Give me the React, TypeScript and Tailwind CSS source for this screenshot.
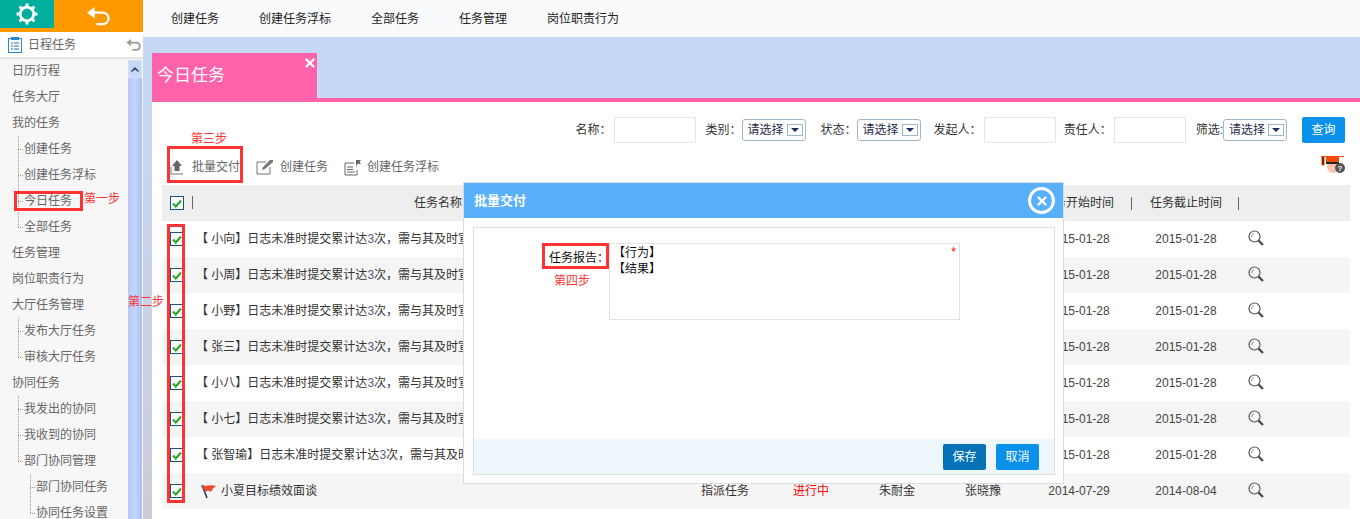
import React from 'react';
import { X, ChevronUp } from 'lucide-react';

const Gear = () => (
  <svg width="24" height="24" viewBox="0 0 24 24">
    <g stroke="#fff" strokeWidth="3">
      <path d="M12 1.500v3M12 19.500v3M1.500 12h3M19.500 12h3M4.600 4.600l2.200 2.200M17.200 17.200l2.200 2.200M4.600 19.400l2.200-2.200M17.200 6.800l2.200-2.200" />
    </g>
    <circle cx="12" cy="12" r="6.800" fill="none" stroke="#fff" strokeWidth="2.800" />
  </svg>
);

const Back = ({ w, h, color, head }: { w: number; h: number; color: string; head: number }) => (
  <svg width={w} height={h} viewBox="0 0 24 20">
    <path d="M0 6 L8 0 V12 Z" fill={color} />
    <path d="M6 6 H16 C20 6 22.500 8.500 22.500 12 C22.500 15.500 20 18 16 18 H10" fill="none" stroke={color} strokeWidth={head} />
  </svg>
);

const Lens = () => (
  <svg width="16" height="16" viewBox="0 0 16 16">
    <circle cx="6.500" cy="6.500" r="5.500" fill="none" stroke="#555" strokeWidth="1.200" />
    <path d="M3.500 7 A3.200 3.200 0 0 1 6 3.500" fill="none" stroke="#999" />
    <path d="M10.500 10.500 L15 15" stroke="#444" strokeWidth="2.200" />
  </svg>
);

const Tree = ({ children }: { children: React.ReactNode }) => (
  <div className="relative">
    <div className="absolute bottom-[13px] left-[18px] top-0 w-0 border-l border-dotted border-[#999]" />
    {children}
  </div>
);

const Item = ({ label, level = 0 }: { label: string; level?: number }) => {
  if (level === 0) return <div className="h-[26px] pl-3 leading-[26px]">{label}</div>;
  return (
    <div className={`flex h-[26px] items-center ${level === 1 ? 'pl-[18px]' : 'pl-[30px]'}`}>
      <span className="mr-px w-[5px] border-t border-dotted border-[#999]" />
      {label}
    </div>
  );
};

const Sidebar = () => (
  <aside className="flex h-full w-[143px] shrink-0 flex-col overflow-hidden bg-[#f7f7f7] text-[12px] text-[#666]">
    <div className="h-8 shrink-0 bg-[#ff9900]">
      <div className="flex h-full">
        <div className="flex h-7 w-[54px] items-center justify-center bg-[#00ae9d]">
          <Gear />
        </div>
        <div className="flex h-8 flex-1 items-center justify-center">
          <Back w={23} h={19} color="#fff" head={2.4} />
        </div>
      </div>
    </div>
    <div className="flex h-[27px] shrink-0 items-center border-b-2 border-[#e4e4e4] bg-white pl-2 pr-[2px]">
      <svg width="14" height="16" viewBox="0 0 14 16" className="shrink-0">
        <rect x="0.5" y="1.5" width="13" height="14" fill="#fff" stroke="#2a86d0" />
        <rect x="3" y="0" width="8" height="3" fill="#2a86d0" />
        <path d="M3 6h2M6 6h5M3 9h2M6 9h5M3 12h2M6 12h5" stroke="#1f6fb5" />
      </svg>
      <span className="ml-[6px] flex-1">日程任务</span>
      <Back w={15} h={12} color="#999" head={3} />
    </div>
    <div className="flex min-h-0 flex-1">
      <div className="-mt-px w-[127px] shrink-0">
        <Item label="日历行程" />
        <Item label="任务大厅" />
        <Item label="我的任务" />
        <Tree>
          <Item label="创建任务" level={1} />
          <Item label="创建任务浮标" level={1} />
          <Item label="今日任务" level={1} />
          <Item label="全部任务" level={1} />
        </Tree>
        <Item label="任务管理" />
        <Item label="岗位职责行为" />
        <Item label="大厅任务管理" />
        <Tree>
          <Item label="发布大厅任务" level={1} />
          <Item label="审核大厅任务" level={1} />
        </Tree>
        <Item label="协同任务" />
        <Tree>
          <Item label="我发出的协同" level={1} />
          <Item label="我收到的协同" level={1} />
          <Item label="部门协同管理" level={1} />
        </Tree>
        <div className="relative">
          <div className="absolute bottom-[13px] left-[30px] top-0 border-l border-dotted border-[#999]" />
          <Item label="部门协同任务" level={2} />
          <Item label="协同任务设置" level={2} />
        </div>
      </div>
      <div className="ml-px mt-px flex w-[14px] flex-col bg-gradient-to-r from-[#b4c9f7] via-[#c3d6fb] to-[#a9c1f2]">
        <div className="flex h-[18px] items-center justify-center border border-[#d5e2f8] bg-[#c8d9f7] text-[#33507f]">
          <ChevronUp size={13} strokeWidth={3.5} />
        </div>
      </div>
    </div>
  </aside>
);

const Field = ({ label, width, className = '' }: { label: string; width: number; className?: string }) => (
  <div className={`flex items-center ${className}`}>
    <span>{label}：</span>
    <div className="ml-[2px] h-[26px] border border-[#e2e6e8] bg-white" style={{ width }} />
  </div>
);

const Select = ({ label, className = '' }: { label: string; className?: string }) => (
  <div className={`flex items-center ${className}`}>
    <span>{label}</span>
    <div className="flex h-[22px] w-[64px] items-center justify-between rounded-[3px] border border-[#9db8c4] bg-white pl-[5px] pr-[2px] text-[#1f2d4d]">
      请选择
      <span className="flex h-[12px] w-[16px] items-center justify-center border border-[#9db8c4]">
        <span className="h-0 w-0 border-x-[4px] border-t-[4px] border-x-transparent border-t-[#1d2f55]" />
      </span>
    </div>
  </div>
);

const Check = () => (
  <span className="flex h-[14px] w-[14px] shrink-0 items-center justify-center border border-[#1c5179] bg-white">
    <svg width="10" height="9" viewBox="0 0 10 9">
      <path d="M1 4.5 L3.8 7.5 L9 1.5" fill="none" stroke="#22a52d" strokeWidth="2" />
    </svg>
  </span>
);

const Sep = () => <span className="block h-[13px] w-px bg-[#666]" />;

const names = ['小向', '小周', '小野', '张三', '小八', '小七', '张智瑜'];

const Row = ({ children, shaded, start, end, type = '', status = '', from = '', to = '' }: {
  children: React.ReactNode; shaded: boolean; start: string; end: string;
  type?: string; status?: string; from?: string; to?: string;
}) => (
  <div className={`flex h-9 items-center ${shaded ? 'bg-[#f5f5f5]' : 'bg-white'}`}>
    <div className="w-[28px] pl-2"><Check /></div>
    <div className="flex w-[492px] items-center overflow-hidden whitespace-nowrap pl-[6px] text-[#333]">{children}</div>
    <div className="w-[86px] text-center">{type}</div>
    <div className="w-[86px] text-center text-[#f00]">{status}</div>
    <div className="w-[86px] text-center">{from}</div>
    <div className="w-[86px] text-center">{to}</div>
    <div className="w-[106px] text-center text-[#444]">{start}</div>
    <div className="w-[108px] text-center text-[#444]">{end}</div>
    <div className="flex w-[32px] -translate-y-px justify-center"><Lens /></div>
  </div>
);

const Dialog = () => (
  <div className="absolute left-[463px] top-[182px] flex h-[302px] w-[601px] flex-col border border-[#d9dbe6] bg-white">
    <div className="flex h-[35px] shrink-0 items-center justify-between bg-[#58b0fb] pl-[10px] pr-[8px] text-[13px] font-bold text-white">
      批量交付
      <span className="flex h-[27px] w-[27px] items-center justify-center rounded-full border-[3px] border-white">
        <X size={14} strokeWidth={4} />
      </span>
    </div>
    <div className="ml-[9px] mr-[8px] mt-[9px] flex h-[248px] flex-col border border-[#ddd] border-b-0">
      <div className="flex flex-1 pl-[70px] pt-[15px]">
        <div className="flex w-[65px] justify-end pt-[6px] text-[#111]">任务报告：</div>
        <div className="relative h-[77px] w-[351px] border border-[#e2e2e2] pl-[3px] pt-px leading-[16px] text-[#111]">
          <div>【行为】</div>
          <div>【结果】</div>
          <span className="absolute right-[3px] top-0 text-[#f00]">*</span>
        </div>
      </div>
      <div className="flex h-[36px] shrink-0 items-center justify-end gap-[10px] border-b border-[#ddd] bg-[#eef7fc] pr-[15px] text-white">
        <span className="flex h-[26px] w-[43px] items-center justify-center rounded-[2px] bg-[#0572b8]">保存</span>
        <span className="flex h-[26px] w-[43px] items-center justify-center rounded-[2px] bg-[#0a91ea]">取消</span>
      </div>
    </div>
  </div>
);

// red step marks drawn on top of the page
const Marks = () => (
  <>
    <div className="absolute left-[14px] top-[191px] h-[20px] w-[69px] border-[3px] border-[#f33]" />
    <div className="absolute left-[84px] top-[191px] leading-[16px] text-[#f33]">第一步</div>
    <div className="absolute left-[128px] top-[294px] leading-[16px] text-[#f33]">第二步</div>
    <div className="absolute left-[191px] top-[131px] leading-[16px] text-[#f33]">第三步</div>
    <div className="absolute left-[554px] top-[273px] leading-[16px] text-[#f33]">第四步</div>
    <div className="absolute left-[167px] top-[146px] h-[37px] w-[76px] border-[3px] border-[#f33]" />
    <div className="absolute left-[167px] top-[224px] h-[279px] w-[18px] border-[3px] border-[#f33]" />
    <div className="absolute left-[542px] top-[243px] h-[26px] w-[67px] border-[3px] border-[#f33]" />
  </>
);

export default function App() {
  return (
    <div className="relative flex h-[519px] w-[1360px] overflow-hidden bg-white font-['Liberation_Sans','Noto_Sans_CJK_SC',sans-serif] text-[12px] text-[#333]">
      <Sidebar />
      <div className="flex min-w-0 flex-1 flex-col">
        <nav className="flex h-[37px] shrink-0 items-center gap-10 bg-[#f9fafc] pl-[28px] text-[#222]">
          <span>创建任务</span>
          <span>创建任务浮标</span>
          <span>全部任务</span>
          <span>任务管理</span>
          <span>岗位职责行为</span>
        </nav>
        <div className="flex min-h-0 flex-1 flex-col bg-gradient-to-b from-[#c5d9f5] to-[#cccbd8] pl-[9px]">
          <div className="flex h-[61px] shrink-0 items-end bg-[#c5d9f5]">
            <div className="relative flex h-[45px] w-[165px] items-center bg-[#fd62ab] pl-[5px] pt-px text-[17px] text-white">
              今日任务
              <X size={14} strokeWidth={4} className="absolute right-0 top-[3px]" />
            </div>
          </div>
          <div className="h-1 shrink-0 bg-[#fd62ab]" />
          <div className="min-h-0 flex-1 bg-white">
            <div className="mt-[15px] flex h-[26px] items-center justify-end pr-[15px]">
              <Field label="名称" width={82} />
              <Select label="类别：" className="ml-[10px]" />
              <Select label="状态：" className="ml-[15px]" />
              <Field label="发起人" width={72} className="ml-[13px]" />
              <Field label="责任人" width={72} className="ml-[8px]" />
              <Select label="筛选:" className="ml-[10px]" />
              <span className="ml-[15px] flex h-[26px] w-[43px] items-center justify-center rounded-[2px] bg-[#0a91ea] text-white">查询</span>
            </div>
            <div className="flex h-[42px] items-center pl-[18px] pr-[15px] pt-[6px] text-[#666]">
              <svg width="14" height="16" viewBox="0 0 14 16" className="mr-[8px] shrink-0">
                <path d="M7 1 L12 7 H9.5 V12 H4.5 V7 H2 Z" fill="#666" />
                <path d="M0 9h2M0 11h2M0 13h2M0 15h13" stroke="#777" />
              </svg>
              <span>批量交付</span>
              <svg width="18" height="16" viewBox="0 0 18 16" className="ml-[16px] mr-[6px] shrink-0">
                <path d="M10 3H1V15H14V8" fill="none" stroke="#777" />
                <path d="M6 11 L7 8 L14 1 L17 1 L17 3 L9 10 Z" fill="#777" />
              </svg>
              <span>创建任务</span>
              <svg width="18" height="17" viewBox="0 0 18 17" className="ml-[16px] mr-[5px] shrink-0">
                <path d="M10 4H1V16H13V11" fill="none" stroke="#666" />
                <path d="M3 8h6M3 10.500h6M3 13h8" stroke="#666" />
                <path d="M12 9V1h5l-1.500 2L17 5h-4" fill="#666" />
              </svg>
              <span>创建任务浮标</span>
              <svg width="24" height="17" viewBox="0 0 24 17" className="ml-auto -translate-y-[3px] shrink-0">
                <circle cx="12" cy="11" r="6" fill="#fdc2b2" />
                <rect x="5" y="1" width="13" height="6" fill="#f24a06" />
                <rect x="5" y="6" width="13" height="2" fill="#222" />
                <path d="M0 .5h23M1 0v9h2V0" stroke="#f24a06" />
                <circle cx="19" cy="12" r="5" fill="#555" />
                <text x="19" y="15" textAnchor="middle" fontSize="8" fontWeight="bold" fill="#fff">?</text>
              </svg>
            </div>
            <div className="mx-[10px]">
              <div className="flex h-9 items-center bg-[#eee] text-[#333]">
                <div className="flex w-[28px] pl-2"><Check /></div>
                <div className="relative w-[492px] pl-[4px] text-center">
                  <span className="absolute left-[2px] top-[2px]"><Sep /></span>
                  任务名称
                </div>
                <div className="w-[344px]" />
                <div className="flex w-[106px] items-center justify-between pl-[16px]">任务开始时间<Sep /></div>
                <div className="flex w-[107px] items-center justify-between pl-[18px]">任务截止时间<Sep /></div>
              </div>
              {names.map((n, i) => (
                <Row key={n} shaded={i % 2 === 1} start="2015-01-28" end="2015-01-28">
                  【 {n}】日志未准时提交累计达<span className="text-[#555a88]">3</span>次，需与其及时宣导
                </Row>
              ))}
              <Row shaded start="2014-07-29" end="2014-08-04" type="指派任务" status="进行中" from="朱耐金" to="张晓豫">
                <svg width="16" height="15" viewBox="0 0 16 15" className="ml-[5px] mr-[4px] shrink-0">
                  <path d="M1 1 L6 14" stroke="#23426e" strokeWidth="1.600" />
                  <path d="M1 1 C5 3 9 0 15 2 C12 4 11 6 10 8 C8 6 6 7 4 8 Z" fill="#f04a2a" />
                </svg>
                小夏目标绩效面谈
              </Row>
            </div>
          </div>
        </div>
      </div>
      <Dialog />
      <Marks />
    </div>
  );
}
